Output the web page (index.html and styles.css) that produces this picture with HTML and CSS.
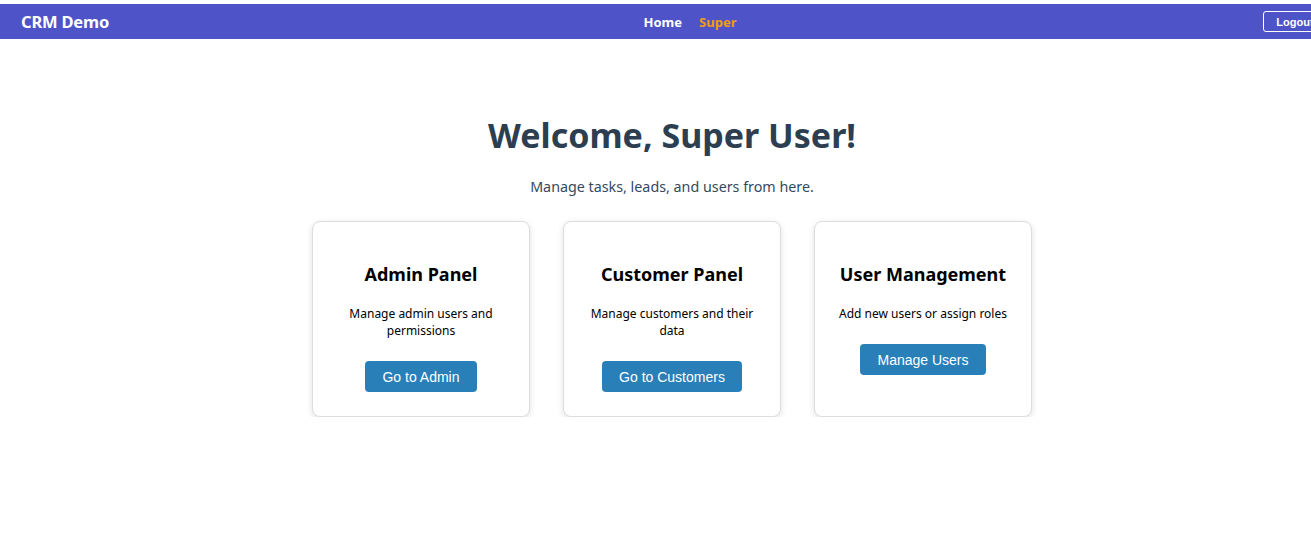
FILE: index.html
```html
<!DOCTYPE html>
<html lang="en">
<head>
<meta charset="utf-8">
<title>CRM Demo</title>
<link rel="stylesheet" href="styles.css">
</head>
<body>
<nav class="navbar">
  <div class="brand">CRM Demo</div>
  <div class="nav-links">
    <a class="nav-link" href="#">Home</a>
    <a class="nav-link active" href="#">Super</a>
  </div>
  <div class="nav-right">
    <button class="logout">Logout</button>
  </div>
</nav>
<main class="main">
  <h1 class="title">Welcome, Super User!</h1>
  <p class="subtitle">Manage tasks, leads, and users from here.</p>
  <div class="cards">
    <div class="card">
      <h3 class="card-title">Admin Panel</h3>
      <p class="card-text">Manage admin users and permissions</p>
      <button class="card-btn">Go to Admin</button>
    </div>
    <div class="card">
      <h3 class="card-title">Customer Panel</h3>
      <p class="card-text">Manage customers and their data</p>
      <button class="card-btn">Go to Customers</button>
    </div>
    <div class="card">
      <h3 class="card-title">User Management</h3>
      <p class="card-text">Add new users or assign roles</p>
      <button class="card-btn">Manage Users</button>
    </div>
  </div>
</main>
</body>
</html>
```
FILE: styles.css
```css
html, body {
  margin: 0;
  padding: 0;
  overflow-x: hidden;
}
body {
  padding-top: 4px;
  font-family: "Noto Sans", "Open Sans", sans-serif;
  background: #ffffff;
}
.navbar {
  width: 1374px;
  height: 35px;
  box-sizing: border-box;
  background: #4e54c8;
  display: grid;
  grid-template-columns: 1fr auto 1fr;
  align-items: center;
  padding: 0 21px;
}
.brand {
  color: #fff;
  font-weight: 700;
  font-size: 16.5px;
  letter-spacing: -0.2px;
}
.nav-links {
  display: flex;
  gap: 17px;
  padding-left: 6px;
}
.nav-link {
  color: #fff;
  text-decoration: none;
  font-weight: 700;
  font-size: 13px;
}
.nav-link.active {
  color: #f39c12;
}
.nav-right {
  display: flex;
  justify-content: flex-end;
  padding-right: 26px;
}
.logout {
  font-family: "Liberation Sans", Arial, sans-serif;
  font-weight: 700;
  font-size: 11px;
  color: #fff;
  background: transparent;
  border: 1px solid #fff;
  border-radius: 3px;
  padding: 3px 11px;
  height: 21px;
  width: 64px;
}
.main {
  width: 1344px;
  text-align: center;
  padding-top: 72px;
}
.title {
  margin: 0;
  font-size: 34px;
  font-weight: 700;
  color: #2c3e50;
  line-height: 48px;
}
.subtitle {
  margin: 18px 0 0;
  font-size: 14.3px;
  color: #34495e;
  line-height: 20px;
}
.cards {
  display: flex;
  justify-content: center;
  gap: 33px;
  margin-top: 24px;
}
.card {
  width: 218px;
  box-sizing: border-box;
  border: 1px solid #dddddd;
  border-radius: 8px;
  box-shadow: 0 2px 6px rgba(0, 0, 0, 0.12);
  padding: 21px 20px 24px;
  background: #fff;
}
.card-title {
  margin: 19px 0 0;
  font-size: 18px;
  font-weight: 700;
  line-height: 25px;
  color: #000;
}
.card-text {
  margin: 18px 0 0;
  font-size: 12px;
  line-height: 17px;
  color: #000;
}
.card-btn {
  margin-top: 22px;
  font-family: "Liberation Sans", Arial, sans-serif;
  font-size: 14px;
  color: #fff;
  background: #2980b9;
  border: none;
  border-radius: 4px;
  height: 31px;
  padding: 0 17px;
}
```
